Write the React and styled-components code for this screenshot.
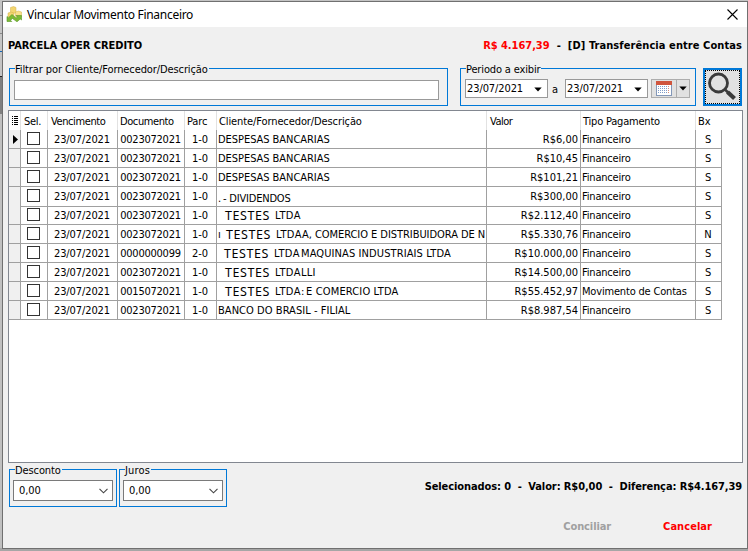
import React from "react";
import styled, { createGlobalStyle } from "styled-components";

const GlobalStyle = createGlobalStyle`
  * {
    box-sizing: border-box;
  }
  body {
    margin: 0;
    color: #000;
    font-family: "DejaVu Sans Condensed", "DejaVu Sans", sans-serif;
    font-stretch: condensed;
    font-size: 11px;
    line-height: 14px;
    overflow: hidden;
  }
`;

const rows = [
  { doc: "0023072021", parc: "1-0", value: "R$6,00", type: "Financeiro", bx: "S", text: [{ t: "DESPESAS BANCARIAS", w: 200 }] },
  { doc: "0023072021", parc: "1-0", value: "R$10,45", type: "Financeiro", bx: "S", text: [{ t: "DESPESAS BANCARIAS", w: 200 }] },
  { doc: "0023072021", parc: "1-0", value: "R$101,21", type: "Financeiro", bx: "S", text: [{ t: "DESPESAS BANCARIAS", w: 200 }] },
  { doc: "0023072021", parc: "1-0", value: "R$300,00", type: "Financeiro", bx: "S", low: true, text: [{ t: ".", w: 5 }, { t: "- DIVIDENDOS", w: 120, ls: -0.2 }] },
  { doc: "0023072021", parc: "1-0", value: "R$2.112,40", type: "Financeiro", bx: "S", text: [{ t: "", w: 7 }, { t: "TESTES", w: 50, big: true }, { t: "LTDA", w: 27, ls: 0.4 }] },
  { doc: "0023072021", parc: "1-0", value: "R$5.330,76", type: "Financeiro", bx: "N", text: [{ t: "ı", w: 8 }, { t: "TESTES", w: 50, big: true }, { t: "LTDA", w: 26, ls: 0.4 }, { t: "A, COMERCIO E DISTRIBUIDORA DE N", w: 182, ls: -0.05 }] },
  { doc: "0000000099", parc: "2-0", value: "R$10.000,00", type: "Financeiro", bx: "S", text: [{ t: "", w: 6 }, { t: "TESTES", w: 50, big: true }, { t: "LTDA", w: 27, ls: 0.4 }, { t: "MAQUINAS INDUSTRIAIS LTDA", w: 180, ls: 0.1 }] },
  { doc: "0023072021", parc: "1-0", value: "R$14.500,00", type: "Financeiro", bx: "S", text: [{ t: "", w: 7 }, { t: "TESTES", w: 50, big: true }, { t: "LTDA", w: 26, ls: 0.4 }, { t: "LLI", w: 30, ls: 0.2 }] },
  { doc: "0015072021", parc: "1-0", value: "R$55.452,97", type: "Movimento de Contas", bx: "S", text: [{ t: "", w: 7 }, { t: "TESTES", w: 50, big: true }, { t: "LTDA", w: 26, ls: 0.4 }, { t: ":", w: 5 }, { t: "E COMERCIO LTDA", w: 120, ls: 0.15 }] },
  { doc: "0023072021", parc: "1-0", value: "R$8.987,54", type: "Financeiro", bx: "S", text: [{ t: "BANCO DO BRASIL - FILIAL", w: 200, ls: 0.05 }] },
];

const Desktop = styled.div`
  width: 748px;
  height: 551px;
  padding: 1px 0 2px 2px;
  background: linear-gradient(
    #c4c4c4 15px, #888 15px 16px, #c4c4c4 16px 33px, #888 33px 34px,
    #c4c4c4 34px 51px, #1467b8 51px 52px, #c4c4c4 52px 76px, #222 76px 77px,
    #808080 77px 114px, #c0c0c0 114px 548px, #a6a6a6 548px
  );
`;

const Window = styled.div`
  width: 746px;
  height: 548px;
  border: 1px solid #707070;
  background: #f0f0f0;
`;

const TitleBar = styled.header`
  display: flex;
  align-items: center;
  height: 25px;
  padding: 0 9px 0 3px;
  background: #fff;
  font-family: "Noto Sans", sans-serif;
  font-stretch: normal;
  font-size: 12px;
`;

const Title = styled.span`
  flex: 1;
  margin-left: 4px;
  letter-spacing: -0.29px;
`;

const Label = styled.span`
  letter-spacing: ${(p) => p.$ls ?? -0.1}px;
  font-weight: ${(p) => (p.$bold ? "bold" : "normal")};
  color: ${(p) => p.$color || "#000"};
  white-space: pre;
`;

const Heading = styled.div`
  display: flex;
  justify-content: space-between;
  height: 41px;
  padding: 12px 5px 0 5px;
`;

const Filters = styled.div`
  display: flex;
  height: 42px;
  padding-left: 6px;
`;

const Group = styled.div`
  position: relative;
  display: flex;
  width: ${(p) => p.$w}px;
  height: 38px;
  margin-right: ${(p) => p.$gap}px;
  padding: ${(p) => p.$pad};
  border: 1px solid #0078d7;
`;

const Legend = styled.div`
  position: absolute;
  top: -6px;
  left: 5px;
  height: 13px;
  padding-right: 1px;
  background: #f0f0f0;
`;

const Input = styled.div`
  width: 425px;
  height: 20px;
  border: 1px solid #999;
  background: #fff;
`;

const DateBox = styled.div`
  display: flex;
  align-items: center;
  justify-content: space-between;
  width: 83px;
  height: 19px;
  padding: 1px 5px 0 1px;
  border: 1px solid #999;
  background: #fff;
`;

const Between = styled.div`
  width: 17px;
  padding: 4px 0 0 4px;
`;

const SplitButton = styled.div`
  display: flex;
  width: 39px;
  height: 19px;
  margin-left: 3px;
  border: 1px solid #adadad;
  background: #e1e1e1;
`;

const SplitPart = styled.div`
  display: flex;
  align-items: center;
  justify-content: center;
  width: ${(p) => p.$w}px;
  border-right: ${(p) => (p.$line ? "1px solid #adadad" : "0")};
`;

const SearchButton = styled.button`
  display: flex;
  align-items: center;
  justify-content: center;
  width: 39px;
  height: 38px;
  padding: 0;
  border: 2px solid #0078d7;
  background: #e1e1e1;
  outline: 1px dotted #000;
  outline-offset: -3px;
`;

const Grid = styled.div`
  width: 735px;
  height: 353px;
  margin-left: 5px;
  border: 1px solid #828790;
  background: #fff;
`;

const columns = "12px 27px 70px 67px 32px 270px 94px 115px 26px";

const HeadRow = styled.div`
  display: grid;
  grid-template-columns: ${columns};
  height: 19px;
`;

const HeadCell = styled.div`
  padding: 4px 0 0 ${(p) => p.$left}px;
  border-right: 1px solid ${(p) => (p.$last ? "transparent" : "#e2e2e2")};
  white-space: nowrap;
`;

const Row = styled.div`
  display: grid;
  grid-template-columns: ${columns};
  width: 713px;
  height: 19px;
`;

const Cell = styled.div`
  display: flex;
  justify-content: ${(p) => p.$align || "flex-start"};
  padding: 3px 2px 0 1px;
  border-right: 1px solid #a0a0a0;
  border-bottom: 1px solid #a0a0a0;
  white-space: nowrap;
`;

const Indicator = styled(Cell)`
  align-items: center;
  padding: 0 0 0 4px;
  background: #f0f0f0;
`;

const CheckCell = styled(Cell)`
  padding: 2px 0 0 6px;
`;

const Check = styled.span`
  width: 13px;
  height: 13px;
  border: 1px solid #333;
  background: #fff;
`;

const Run = styled.span`
  flex: none;
  width: ${(p) => p.$w}px;
  padding-top: ${(p) => (p.$low ? 2 : 0)}px;
  font-family: ${(p) => (p.$big ? '"Noto Sans", sans-serif' : "inherit")};
  font-size: ${(p) => (p.$big ? 12.5 : 11)}px;
  letter-spacing: ${(p) => (p.$big ? 0.55 : p.$ls ?? -0.05)}px;
`;

const Totals = styled.div`
  display: flex;
  height: 46px;
  padding: 6px 5px 0 6px;
`;

const Combo = styled.div`
  display: flex;
  align-items: center;
  justify-content: space-between;
  width: 100px;
  height: 21px;
  padding: 0 4px 0 5px;
  border: 1px solid #7a7a7a;
  background: #fff;
`;

const Summary = styled.div`
  flex: 1;
  padding-top: 11px;
  text-align: right;
`;

const Actions = styled.div`
  display: flex;
  justify-content: flex-end;
  gap: 52px;
  padding: 11px 35px 0 0;
`;

function Arrow() {
  return (
    <svg width="8" height="5" viewBox="0 0 8 5">
      <path d="M0.3 0.5h7.4L4 4.5z" fill="#000" />
    </svg>
  );
}

function Chevron() {
  return (
    <svg width="9" height="6" viewBox="0 0 9 6">
      <path d="M0.5 0.8l4 4 4-4" fill="none" stroke="#444" strokeWidth="1.1" />
    </svg>
  );
}

function AppIcon() {
  return (
    <svg width="17" height="17" viewBox="0 0 17 17">
      <path d="M4.500 1.500l3-1 2.500 1v5l-2.500 1-3-1z" fill="#f3d671" stroke="#d3b04b" strokeWidth=".5" />
      <path d="M9.500 6l3-1 3 1v4.500l-3 1-3-1z" fill="#f8e08a" stroke="#d3b04b" strokeWidth=".5" />
      <path d="M2 7l3-1 3 1v4l-3 1-3-1z" fill="#f3d671" stroke="#d3b04b" strokeWidth=".5" />
      <path d="M1 15.500v-5l1.500 1.200L6 8.500l4 3.500 1.500-1L10 9.500h5.500V14l-1.300-1-3.200 2.800-4.500-3.300-2 1.700 1.300 1.300z" fill="#7dba35" stroke="#559325" strokeWidth=".6" />
    </svg>
  );
}

function CalendarIcon() {
  return (
    <svg width="16" height="15" viewBox="0 0 16 15">
      <rect x=".5" y=".5" width="15" height="14" fill="#fff" stroke="#8397b8" />
      <rect x="0" y="0" width="16" height="4" fill="#d0553d" />
      {[5, 7, 9, 11].map((y) => (
        <path key={y} d={`M2 ${y + 0.5}h10`} stroke="#7f9cc9" strokeDasharray="1 1" />
      ))}
      <path d="M12.500 5v8" stroke="#d98a78" strokeDasharray="1 1" />
    </svg>
  );
}

function SearchIcon() {
  return (
    <svg width="31" height="30" viewBox="0 0 31 30">
      <circle cx="11.500" cy="11" r="9" fill="none" stroke="#3a3a3a" strokeWidth="2.800" />
      <path d="M18 17.500l3 3" stroke="#3a3a3a" strokeWidth="2.500" />
      <path d="M20.500 20l7 6.500" stroke="#3a3a3a" strokeWidth="4.200" />
    </svg>
  );
}

function CloseIcon() {
  return (
    <svg width="11" height="11" viewBox="0 0 11 11">
      <path d="M.5.5l10 10M10.500.5l-10 10" stroke="#000" strokeWidth="1.100" />
    </svg>
  );
}

function GridHeader() {
  return (
    <HeadRow>
      <HeadCell $left={2}>
        <svg width="8" height="11" viewBox="0 0 8 11">
          <path d="M1 1.500h1M1 3.500h1M1 5.500h1M1 7.500h1M1 9.500h1M3 1.500h4M3 3.500h4M3 5.500h4M3 7.500h4M3 9.500h4" stroke="#000" />
        </svg>
      </HeadCell>
      <HeadCell $left={3}><Label $ls={-0.3}>Sel.</Label></HeadCell>
      <HeadCell $left={3}><Label $ls={-0.4}>Vencimento</Label></HeadCell>
      <HeadCell $left={2}><Label $ls={-0.4}>Documento</Label></HeadCell>
      <HeadCell $left={2}><Label>Parc</Label></HeadCell>
      <HeadCell $left={2}><Label>Cliente/Fornecedor/Descrição</Label></HeadCell>
      <HeadCell $left={3}><Label $ls={-0.5}>Valor</Label></HeadCell>
      <HeadCell $left={2}><Label $ls={-0.2}>Tipo Pagamento</Label></HeadCell>
      <HeadCell $left={2} $last><Label>Bx</Label></HeadCell>
    </HeadRow>
  );
}

function GridRow({ item, current }) {
  return (
    <Row>
      <Indicator>
        {current && (
          <svg width="5" height="9" viewBox="0 0 5 9">
            <path d="M0 0l5 4.500L0 9z" fill="#000" />
          </svg>
        )}
      </Indicator>
      <CheckCell><Check /></CheckCell>
      <Cell $align="center"><Label>23/07/2021</Label></Cell>
      <Cell $align="center"><Label $ls={-0.25}>{item.doc}</Label></Cell>
      <Cell $align="center"><Label>{item.parc}</Label></Cell>
      <Cell>
        {item.text.map((run, i) => (
          <Run key={i} $w={run.w} $big={run.big} $ls={run.ls} $low={item.low}>{run.t}</Run>
        ))}
      </Cell>
      <Cell $align="flex-end"><Label $ls={0}>{item.value}</Label></Cell>
      <Cell><Label $ls={-0.18}>{item.type}</Label></Cell>
      <Cell $align="center"><Label>{item.bx}</Label></Cell>
    </Row>
  );
}

export default function App() {
  return (
    <Desktop>
      <GlobalStyle />
      <Window>
        <TitleBar>
          <AppIcon />
          <Title>Vincular Movimento Financeiro</Title>
          <CloseIcon />
        </TitleBar>
        <Heading>
          <Label $bold $ls={-0.05}>PARCELA OPER CREDITO</Label>
          <div>
            <Label $bold $color="#f00" $ls={-0.03}>R$ 4.167,39</Label>
            <Label $bold $ls={0.08}>{"  -  [D] Transferência entre Contas"}</Label>
          </div>
        </Heading>
        <Filters>
          <Group $w={439} $gap={12} $pad="11px 4px">
            <Legend><Label>Filtrar por Cliente/Fornecedor/Descrição</Label></Legend>
            <Input />
          </Group>
          <Group $w={236} $gap={7} $pad="10px 4px">
            <Legend><Label $ls={-0.15}>Periodo a exibir</Label></Legend>
            <DateBox><Label>23/07/2021</Label><Arrow /></DateBox>
            <Between>a</Between>
            <DateBox><Label>23/07/2021</Label><Arrow /></DateBox>
            <SplitButton>
              <SplitPart $w={25} $line><CalendarIcon /></SplitPart>
              <SplitPart $w={12}><Arrow /></SplitPart>
            </SplitButton>
          </Group>
          <SearchButton><SearchIcon /></SearchButton>
        </Filters>
        <Grid>
          <GridHeader />
          {rows.map((item, i) => (
            <GridRow key={i} item={item} current={i === 0} />
          ))}
        </Grid>
        <Totals>
          <Group $w={108} $gap={2} $pad="10px 3px">
            <Legend><Label>Desconto</Label></Legend>
            <Combo><Label>0,00</Label><Chevron /></Combo>
          </Group>
          <Group $w={108} $gap={0} $pad="10px 3px">
            <Legend><Label $ls={0.2}>Juros</Label></Legend>
            <Combo><Label>0,00</Label><Chevron /></Combo>
          </Group>
          <Summary>
            <Label $bold>{"Selecionados: 0  -  Valor: R$0,00  -  Diferença: R$4.167,39"}</Label>
          </Summary>
        </Totals>
        <Actions>
          <Label $bold $color="#a0a0a0">Conciliar</Label>
          <Label $bold $color="#f00" $ls={0.05}>Cancelar</Label>
        </Actions>
      </Window>
    </Desktop>
  );
}
